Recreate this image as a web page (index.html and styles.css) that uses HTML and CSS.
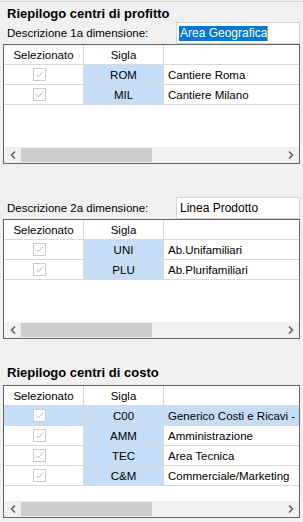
FILE: index.html
```html
<!DOCTYPE html>
<html lang="it">
<head>
    <meta charset="UTF-8">
    <meta name="viewport" content="width=device-width, initial-scale=1.0">
    <title>Riepilogo centri</title>
    <link rel="stylesheet" href="styles.css">
</head>
<body>
    <div class="panel">
        <h2 class="title">Riepilogo centri di profitto</h2>
        <div class="field">
            <label>Descrizione 1a dimensione:</label>
            <div class="textbox"><span class="sel">Area Geografica</span><span class="caret"></span></div>
        </div>

        <div class="grid">
            <div class="row head">
                <div class="cell check">Selezionato</div>
                <div class="cell">Sigla</div>
                <div class="cell desc"></div>
            </div>
            <div class="row">
                <div class="cell check"><svg class="box" width="13" height="13" viewBox="0 0 13 13"><rect x="0.5" y="0.5" width="12" height="12" fill="#fff" stroke="#cccccc"/><path d="M3 6.5 L5.3 8.8 L10 3.8" fill="none" stroke="#bdbdbd" stroke-width="1"/></svg></div>
                <div class="cell sigla">ROM</div>
                <div class="cell desc">Cantiere Roma</div>
            </div>
            <div class="row">
                <div class="cell check"><svg class="box" width="13" height="13" viewBox="0 0 13 13"><rect x="0.5" y="0.5" width="12" height="12" fill="#fff" stroke="#cccccc"/><path d="M3 6.5 L5.3 8.8 L10 3.8" fill="none" stroke="#bdbdbd" stroke-width="1"/></svg></div>
                <div class="cell sigla">MIL</div>
                <div class="cell desc">Cantiere Milano</div>
            </div>
            <div class="fill"></div>
            <div class="hscroll">
                <div class="arrow"><svg width="6" height="8" viewBox="0 0 6 8"><path d="M5 0.5 L1.5 4 L5 7.5" fill="none" stroke="#606060" stroke-width="1.6"/></svg></div>
                <div class="thumb"></div>
                <div class="track"></div>
                <div class="arrow"><svg width="6" height="8" viewBox="0 0 6 8"><path d="M1 0.5 L4.5 4 L1 7.5" fill="none" stroke="#606060" stroke-width="1.6"/></svg></div>
            </div>
        </div>

        <div class="field field-2">
            <label>Descrizione 2a dimensione:</label>
            <div class="textbox"><span class="plain">Linea Prodotto</span></div>
        </div>

        <div class="grid">
            <div class="row head">
                <div class="cell check">Selezionato</div>
                <div class="cell">Sigla</div>
                <div class="cell desc"></div>
            </div>
            <div class="row">
                <div class="cell check"><svg class="box" width="13" height="13" viewBox="0 0 13 13"><rect x="0.5" y="0.5" width="12" height="12" fill="#fff" stroke="#cccccc"/><path d="M3 6.5 L5.3 8.8 L10 3.8" fill="none" stroke="#bdbdbd" stroke-width="1"/></svg></div>
                <div class="cell sigla">UNI</div>
                <div class="cell desc">Ab.Unifamiliari</div>
            </div>
            <div class="row">
                <div class="cell check"><svg class="box" width="13" height="13" viewBox="0 0 13 13"><rect x="0.5" y="0.5" width="12" height="12" fill="#fff" stroke="#cccccc"/><path d="M3 6.5 L5.3 8.8 L10 3.8" fill="none" stroke="#bdbdbd" stroke-width="1"/></svg></div>
                <div class="cell sigla">PLU</div>
                <div class="cell desc">Ab.Plurifamiliari</div>
            </div>
            <div class="fill"></div>
            <div class="hscroll">
                <div class="arrow"><svg width="6" height="8" viewBox="0 0 6 8"><path d="M5 0.5 L1.5 4 L5 7.5" fill="none" stroke="#606060" stroke-width="1.6"/></svg></div>
                <div class="thumb"></div>
                <div class="track"></div>
                <div class="arrow"><svg width="6" height="8" viewBox="0 0 6 8"><path d="M1 0.5 L4.5 4 L1 7.5" fill="none" stroke="#606060" stroke-width="1.6"/></svg></div>
            </div>
        </div>

        <h2 class="title title-3">Riepilogo centri di costo</h2>

        <div class="grid grid-tall">
            <div class="row head">
                <div class="cell check">Selezionato</div>
                <div class="cell">Sigla</div>
                <div class="cell desc"></div>
            </div>
            <div class="row selected">
                <div class="cell check"><svg class="box" width="13" height="13" viewBox="0 0 13 13"><rect x="0.5" y="0.5" width="12" height="12" fill="#fff" stroke="#cccccc"/><path d="M3 6.5 L5.3 8.8 L10 3.8" fill="none" stroke="#bdbdbd" stroke-width="1"/></svg></div>
                <div class="cell sigla">C00</div>
                <div class="cell desc">Generico Costi e Ricavi - Indiretti</div>
            </div>
            <div class="row">
                <div class="cell check"><svg class="box" width="13" height="13" viewBox="0 0 13 13"><rect x="0.5" y="0.5" width="12" height="12" fill="#fff" stroke="#cccccc"/><path d="M3 6.5 L5.3 8.8 L10 3.8" fill="none" stroke="#bdbdbd" stroke-width="1"/></svg></div>
                <div class="cell sigla">AMM</div>
                <div class="cell desc">Amministrazione</div>
            </div>
            <div class="row">
                <div class="cell check"><svg class="box" width="13" height="13" viewBox="0 0 13 13"><rect x="0.5" y="0.5" width="12" height="12" fill="#fff" stroke="#cccccc"/><path d="M3 6.5 L5.3 8.8 L10 3.8" fill="none" stroke="#bdbdbd" stroke-width="1"/></svg></div>
                <div class="cell sigla">TEC</div>
                <div class="cell desc">Area Tecnica</div>
            </div>
            <div class="row">
                <div class="cell check"><svg class="box" width="13" height="13" viewBox="0 0 13 13"><rect x="0.5" y="0.5" width="12" height="12" fill="#fff" stroke="#cccccc"/><path d="M3 6.5 L5.3 8.8 L10 3.8" fill="none" stroke="#bdbdbd" stroke-width="1"/></svg></div>
                <div class="cell sigla">C&amp;M</div>
                <div class="cell desc">Commerciale/Marketing</div>
            </div>
            <div class="fill"></div>
            <div class="hscroll">
                <div class="arrow"><svg width="6" height="8" viewBox="0 0 6 8"><path d="M5 0.5 L1.5 4 L5 7.5" fill="none" stroke="#606060" stroke-width="1.6"/></svg></div>
                <div class="thumb"></div>
                <div class="track"></div>
                <div class="arrow"><svg width="6" height="8" viewBox="0 0 6 8"><path d="M1 0.5 L4.5 4 L1 7.5" fill="none" stroke="#606060" stroke-width="1.6"/></svg></div>
            </div>
        </div>
    </div>
</body>
</html>
```

FILE: styles.css
```css
body {
    margin: 0;
    background-color: #f0f0f0;
    font-family: "Liberation Sans", Arial, sans-serif;
    font-size: 11.5px;
    color: #000;
}

.panel {
    margin-top: 1px;
    border-top: 1px solid #dadada;
}

.title {
    margin: 4px 0 0 7px;
    height: 16px;
    line-height: 16px;
    font-size: 13px;
    font-weight: bold;
}

.title-3 {
    margin-top: 26px;
    margin-bottom: 4px;
}

.field {
    display: flex;
    align-items: center;
    height: 22px;
    padding-left: 7px;
}

.field-2 {
    margin-top: 33px;
}

.field label {
    width: 169px;
}

.textbox {
    width: 124px;
    height: 22px;
    box-sizing: border-box;
    border: 1px solid #d4d4d4;
    background-color: #fff;
    display: flex;
    align-items: center;
    padding-left: 2px;
    font-size: 12px;
}

.sel {
    background-color: #0078d7;
    color: #fff;
    line-height: 15px;
    padding: 0 0 0 1px;
}

.caret {
    width: 1px;
    height: 15px;
    background-color: #f08a24;
}

.plain {
    padding-left: 1px;
}

.grid {
    margin-left: 3px;
    width: 297px;
    height: 120px;
    box-sizing: border-box;
    border: 1px solid #646464;
    background-color: #fff;
    display: flex;
    flex-direction: column;
}

.grid-tall {
    height: 133px;
}

.row {
    display: grid;
    grid-template-columns: 80px 80px 1fr;
    height: 20px;
    flex: none;
    box-sizing: border-box;
    border-bottom: 1px solid #d9d9d9;
}

.cell {
    display: flex;
    align-items: center;
    border-right: 1px solid #d9d9d9;
    white-space: nowrap;
    overflow: hidden;
}

.head .cell {
    justify-content: center;
}

.check {
    justify-content: flex-start;
    padding-left: 29px;
}

.head .check {
    padding-left: 0;
}

.sigla {
    justify-content: center;
    background-color: #c6ddf7;
}

.desc {
    border-right: none;
    padding-left: 4px;
}

.selected .cell {
    background-color: #c6ddf7;
}

.fill {
    flex: 1;
}

.hscroll {
    flex: none;
    height: 16px;
    display: flex;
    background-color: #f0f0f0;
}

.arrow {
    width: 17px;
    display: flex;
    align-items: center;
    justify-content: center;
}

.thumb {
    width: 131px;
    margin: 1px 0;
    background-color: #cdcdcd;
}

.track {
    flex: 1;
}
```
